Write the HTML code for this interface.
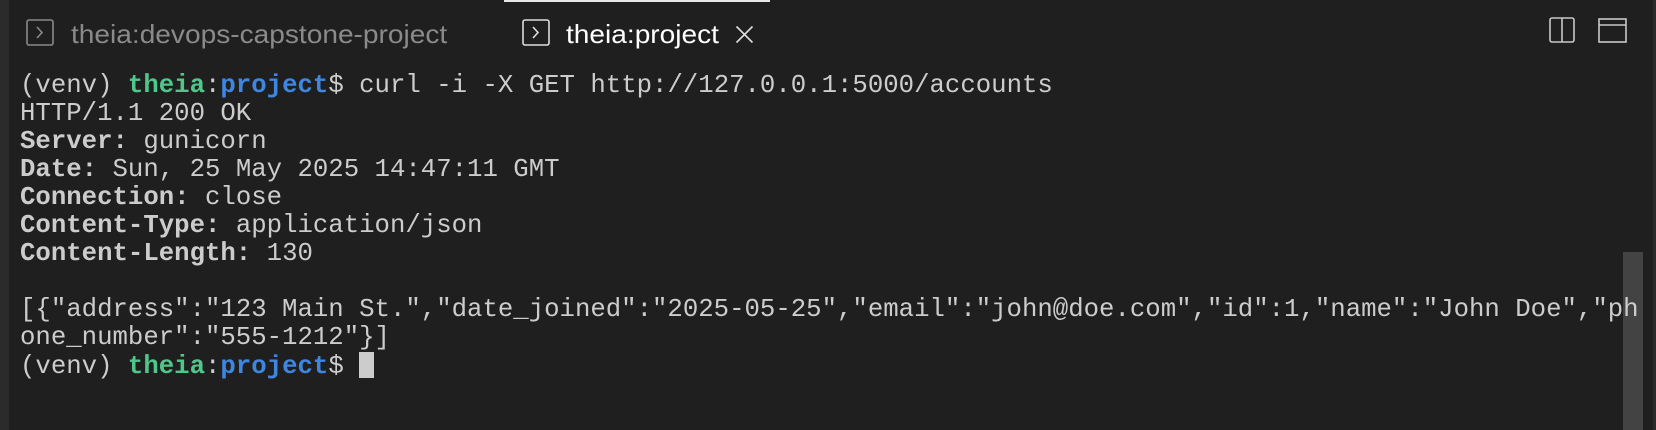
<!DOCTYPE html>
<html><head><meta charset="utf-8"><style>
html,body{margin:0;padding:0;width:1656px;height:430px;overflow:hidden;background:#1f1f1f;}
.left{position:absolute;left:0;top:0;width:9px;height:430px;background:#2b2b2b;}
.right{position:absolute;right:0;top:0;width:3px;height:430px;background:#2b2b2b;}
.topline{position:absolute;left:504px;top:0;width:266px;height:2px;background:#e8e8e8;}
.tt{position:absolute;top:18px;font-family:"Liberation Sans",sans-serif;font-size:26px;line-height:32px;white-space:nowrap;transform-origin:0 0;transform:scaleX(1.08);}
.term{position:absolute;left:20px;top:72px;font-family:"Liberation Mono",monospace;font-size:25.7px;line-height:28px;color:#cccccc;white-space:pre;z-index:2;}
.g{color:#4fc68a;font-weight:bold}.b{color:#3f86e0;font-weight:bold}.w{font-weight:bold}
.cursor{display:inline-block;width:15px;height:26px;background:#cccccc;vertical-align:-5px;}
.sb{position:absolute;left:1623px;top:252px;width:20px;height:178px;background:#434343;z-index:1;}
</style></head><body>
<div class="left"></div><div class="right"></div><div class="topline"></div>
<svg style="position:absolute;left:26px;top:19px" width="29" height="28"><rect x="1" y="1" width="26" height="25" rx="2" fill="none" stroke="#8a8a8a" stroke-width="1.6"/><path d="M11 8 L16 13.5 L11 19" stroke="#8a8a8a" stroke-width="1.6" fill="none"/></svg>
<div class="tt" style="left:71px;color:#8a8a8a">theia:devops-capstone-project</div>
<svg style="position:absolute;left:522px;top:19px" width="29" height="28"><rect x="1" y="1" width="26" height="25" rx="2" fill="none" stroke="#dddddd" stroke-width="1.6"/><path d="M11 8 L16 13.5 L11 19" stroke="#dddddd" stroke-width="1.6" fill="none"/></svg>
<div class="tt" style="left:566px;color:#ffffff">theia:project</div>
<svg style="position:absolute;left:735px;top:25px" width="19" height="19"><path d="M1.5 1.5 L17.5 17.5 M17.5 1.5 L1.5 17.5" stroke="#dddddd" stroke-width="1.6"/></svg>
<svg style="position:absolute;left:1549px;top:17px" width="28" height="27"><rect x="1" y="1" width="24" height="24" rx="2" fill="none" stroke="#c8c8c8" stroke-width="1.6"/><line x1="13" y1="1" x2="13" y2="25" stroke="#c8c8c8" stroke-width="1.6"/></svg>
<svg style="position:absolute;left:1598px;top:18px" width="30" height="26"><rect x="1" y="1" width="27" height="23" fill="none" stroke="#c8c8c8" stroke-width="1.6"/><line x1="1" y1="7" x2="28" y2="7" stroke="#c8c8c8" stroke-width="1.6"/></svg>
<div class="term">(venv) <span class="g">theia</span>:<span class="b">project</span>$ curl -i -X GET http://127.0.0.1:5000/accounts
HTTP/1.1 200 OK
<span class="w">Server:</span> gunicorn
<span class="w">Date:</span> Sun, 25 May 2025 14:47:11 GMT
<span class="w">Connection:</span> close
<span class="w">Content-Type:</span> application/json
<span class="w">Content-Length:</span> 130

[{"address":"123 Main St.","date_joined":"2025-05-25","email":"john@doe.com","id":1,"name":"John Doe","ph
one_number":"555-1212"}]
(venv) <span class="g">theia</span>:<span class="b">project</span>$ <span class="cursor"></span></div>
<div class="sb"></div>
</body></html>
